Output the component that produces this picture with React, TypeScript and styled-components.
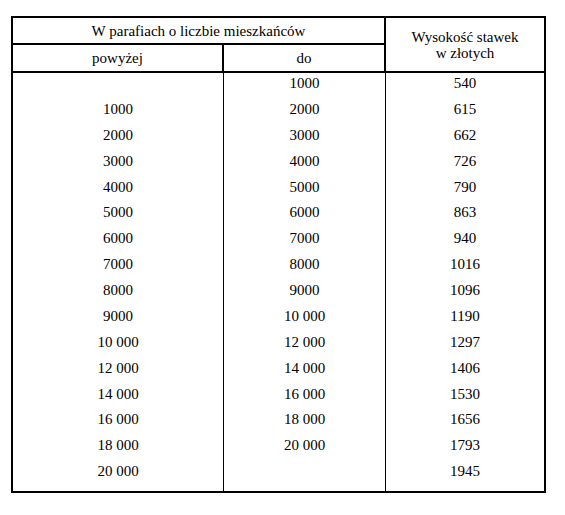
import styled, { createGlobalStyle } from 'styled-components';

const GlobalStyle = createGlobalStyle`
  html, body {
    margin: 0;
    padding: 0;
    background: #fff;
  }
  body {
    font-family: "Liberation Serif", "Times New Roman", serif;
    color: #000;
  }
`;

const Page = styled.div`
  padding: 16px 0 0 11px;
`;

const RateTable = styled.table`
  border: 2px solid #000;
  border-collapse: separate;
  border-spacing: 0;
  table-layout: fixed;
  width: 535px;
`;

const HeadCell = styled.th<{ $last?: boolean }>`
  font-family: "Liberation Serif", "Times New Roman", serif;
  font-size: 15px;
  font-weight: 400;
  color: #000;
  text-align: center;
  vertical-align: middle;
  padding: 0;
  line-height: 16px;
  border-bottom: 2px solid #000;
  border-right: ${(p) => (p.$last ? 'none' : '2px solid #000')};
`;

const GroupRow = styled.tr`
  height: 27px;
`;

const SubRow = styled.tr`
  height: 28px;
`;

const Row = styled.tr`
  &:first-child td {
    line-height: 21.87px;
    padding-bottom: 2px;
  }
  &:last-child td {
    padding-bottom: 6px;
  }
`;

const Cell = styled.td<{ $last?: boolean }>`
  font-family: "Liberation Serif", "Times New Roman", serif;
  font-size: 15px;
  color: #000;
  text-align: center;
  padding: 0;
  line-height: 25.87px;
  border-right: ${(p) => (p.$last ? 'none' : '1px solid #000')};
`;

const rows: [string, string, string][] = [
  ['', '1000', '540'],
  ['1000', '2000', '615'],
  ['2000', '3000', '662'],
  ['3000', '4000', '726'],
  ['4000', '5000', '790'],
  ['5000', '6000', '863'],
  ['6000', '7000', '940'],
  ['7000', '8000', '1016'],
  ['8000', '9000', '1096'],
  ['9000', '10 000', '1190'],
  ['10 000', '12 000', '1297'],
  ['12 000', '14 000', '1406'],
  ['14 000', '16 000', '1530'],
  ['16 000', '18 000', '1656'],
  ['18 000', '20 000', '1793'],
  ['20 000', '', '1945'],
];

export default function App() {
  return (
    <Page>
      <GlobalStyle />
      <RateTable>
        <colgroup>
          <col style={{ width: 211 }} />
          <col style={{ width: 162 }} />
          <col style={{ width: 158 }} />
        </colgroup>
        <thead>
          <GroupRow>
            <HeadCell colSpan={2}>W parafiach o liczbie mieszkańców</HeadCell>
            <HeadCell rowSpan={2} $last>
              Wysokość stawek
              <br />w złotych
            </HeadCell>
          </GroupRow>
          <SubRow>
            <HeadCell>powyżej</HeadCell>
            <HeadCell>do</HeadCell>
          </SubRow>
        </thead>
        <tbody>
          {rows.map(([from, to, rate], i) => (
            <Row key={i}>
              <Cell>{from}</Cell>
              <Cell>{to}</Cell>
              <Cell $last>{rate}</Cell>
            </Row>
          ))}
        </tbody>
      </RateTable>
    </Page>
  );
}
